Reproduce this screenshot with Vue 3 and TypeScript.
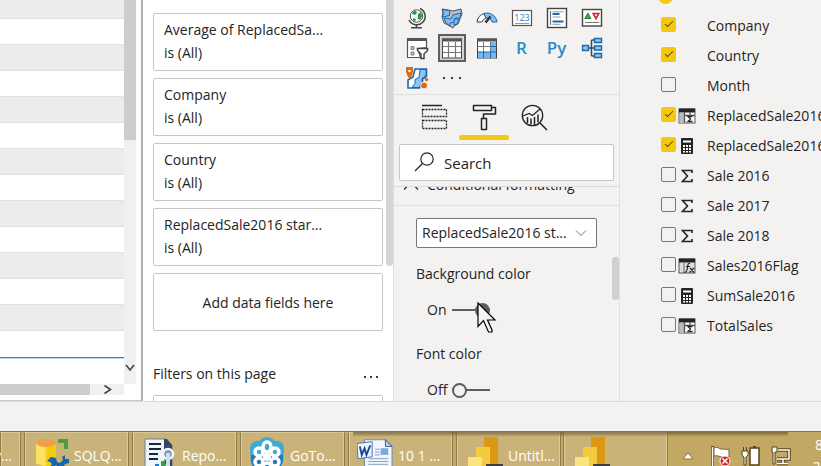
<script setup lang="ts">
import { ref } from 'vue'

interface Field {
  name: string
  checked: boolean
  kind: 'none' | 'sum' | 'calc' | 'table' | 'fx'
}

const rows = Array.from({ length: 14 }, (_, i) => i)

const filters = ref(['Average of ReplacedSa...', 'Company', 'Country', 'ReplacedSale2016 star...'])

const fields = ref<Field[]>([
  { name: 'Company', checked: true, kind: 'none' },
  { name: 'Country', checked: true, kind: 'none' },
  { name: 'Month', checked: false, kind: 'none' },
  { name: 'ReplacedSale2016', checked: true, kind: 'table' },
  { name: 'ReplacedSale2016', checked: true, kind: 'calc' },
  { name: 'Sale 2016', checked: false, kind: 'sum' },
  { name: 'Sale 2017', checked: false, kind: 'sum' },
  { name: 'Sale 2018', checked: false, kind: 'sum' },
  { name: 'Sales2016Flag', checked: false, kind: 'fx' },
  { name: 'SumSale2016', checked: false, kind: 'calc' },
  { name: 'TotalSales', checked: false, kind: 'table' },
])

const search = ref('')
const background = ref(true)
const fontColor = ref(false)
</script>

<template>
  <div class="screen">
    <main class="workspace">
      <section class="canvas">
        <div class="grid-area">
          <div class="grid-rows">
            <div v-for="r in rows" :key="r" class="grid-row"></div>
            <div class="grid-total"></div>
          </div>
          <div class="vscroll">
            <div class="vthumb"></div>
            <svg class="varrow" width="12" height="12" viewBox="0 0 12 12"><path d="M2 3l4 5 4-5" fill="none" stroke="#444" stroke-width="1.6" /></svg>
          </div>
        </div>
        <div class="hscroll">
          <div class="hthumb"></div>
          <svg width="12" height="11" viewBox="0 0 12 11"><path d="M2.500 1.500l6 4-6 4" fill="none" stroke="#444" stroke-width="1.600" /></svg>
        </div>
      </section>

      <section class="filters">
        <div class="filter-list">
          <article v-for="f in filters" :key="f" class="card">
            <span>{{ f }}</span>
            <span>is (All)</span>
          </article>
          <article class="card drop">Add data fields here</article>
          <header class="filter-head">
            <span>Filters on this page</span>
            <button class="dots" aria-label="More options"><i></i><i></i><i></i></button>
          </header>
          <article class="card"></article>
        </div>
        <div class="filter-bar"></div>
      </section>

      <section class="visuals">
        <div class="gallery">
          <button aria-label="Globe map">
            <svg viewBox="0 0 24 24"><circle cx="11.500" cy="10" r="6.200" fill="#fff" stroke="#555" /><path d="M8 5.500l3-1 1 2.500-2 2-3-1zM13 8l3-2 1.200 4-2 4-2.500-1zM8 12l3 1-1 2.500-2-1z" fill="#2c9a4b" /><path d="M15 2.500a8.500 8.500 0 1 1-11 11.500M11.500 18.500v3M6 21.700h11" fill="none" stroke="#444" stroke-width="1.500" /></svg>
          </button>
          <button aria-label="Filled map">
            <svg viewBox="0 0 24 24"><path d="M2 3l6 1 5 1 8-2 1 5-2 5-2 5-4 2-1 2-5-3-4-2-2-6 1-4z" fill="#bdbbb9" stroke="#555" /><path d="M2.500 3.500l7 1v5l-7 1.500 1-4zM13 9l8-2-1 5h-5v4l-5 1v3l-4-3-2-5 7 1z" fill="#83bdf0" stroke="#1769b3" /><path d="M14 13h5l-2 5-3 1z" fill="#83bdf0" stroke="#1769b3" /></svg>
          </button>
          <button aria-label="Gauge">
            <svg viewBox="0 0 24 24"><path d="M2 16a10 10 0 0 1 7-8.500l2 4.500a6 6 0 0 0-4 4z" fill="#fff" stroke="#444" /><path d="M9 7.500A10 10 0 0 1 22 16h-5a5 5 0 0 0-6-4z" fill="#83bdf0" stroke="#1769b3" /><path d="M10.500 16.500l5-6" stroke="#333" stroke-width="2.600" /></svg>
          </button>
          <button aria-label="Card">
            <svg viewBox="0 0 24 24"><rect x="2.500" y="4.500" width="19" height="15" fill="#fff" stroke="#555" stroke-width="1.200" /><text x="12" y="15" text-anchor="middle" font-size="9" fill="#1f80cc">123</text><path d="M5 17.500h14" stroke="#999" /></svg>
          </button>
          <button aria-label="Multi-row card">
            <svg viewBox="0 0 24 24"><rect x="2.500" y="2.500" width="19" height="19" fill="#fff" stroke="#444" stroke-width="1.400" /><path d="M5.500 5v14" stroke="#777" stroke-width="1.200" /><path d="M7.500 8h7M7.500 15.500h11" stroke="#1769b3" stroke-width="2" /><path d="M7.500 5.800h11M7.500 11h8M7.500 18.300h8" stroke="#999" /></svg>
          </button>
          <button aria-label="KPI">
            <svg viewBox="0 0 24 24"><rect x="2.500" y="3.500" width="19" height="16.500" fill="#fff" stroke="#444" stroke-width="1.400" /><path d="M4.800 12.500l3-5.500 3 5.500z" fill="#3eaa57" stroke="#237a39" /><path d="M13.200 7.500h5.600l-2.800 5z" fill="#fff" stroke="#d9262c" stroke-width="1.600" /><path d="M5 16.500h14" stroke="#777" /></svg>
          </button>
          <button aria-label="Slicer">
            <svg viewBox="0 0 24 24"><path d="M2.500 2.500h19v9l-9 1 3 9h-13z" fill="#fff" stroke="#555" stroke-width="1.200" /><path d="M2 3.500h20" stroke="#555" stroke-width="3" /><path d="M6 10.500h3v3H6zM6 16h3v3H6z" fill="#bbb" stroke="#888" /><path d="M12.500 12.500h10v2l-3.500 3.500v4.500h-3V18l-3.500-3.500z" fill="#fff" stroke="#444" stroke-width="1.500" /></svg>
          </button>
          <button class="selected" aria-label="Table">
            <svg viewBox="0 0 24 24"><rect x="2.500" y="3" width="19" height="19" fill="#fff" stroke="#444" /><path d="M2 4h20" stroke="#555" stroke-width="3" /><path d="M2.500 10.500h19M2.500 16.500h19M8.500 6v16M15.500 6v16" stroke="#777" stroke-width="1.200" /></svg>
          </button>
          <button aria-label="Matrix">
            <svg viewBox="0 0 24 24"><rect x="2.500" y="3" width="19" height="19" fill="#fff" stroke="#444" /><path d="M15.500 6H21v15.500H3V16h12.500z" fill="#75b7f0" /><path d="M2 4h20" stroke="#555" stroke-width="3" /><path d="M2.500 10.500h13M8.500 6v10M15.500 6v10" stroke="#777" /><path d="M15.500 10.500h6M3 16h18.500M8.500 16v6M15.500 16v6" stroke="#1769b3" /></svg>
          </button>
          <button class="script">R</button>
          <button class="script">Py</button>
          <button aria-label="Decomposition tree">
            <svg viewBox="0 0 24 24"><path d="M8 12h7M11.500 4v16M11.500 4h4M11.500 20h4" fill="none" stroke="#444" stroke-width="1.500" /><path d="M2.500 9.500h6v5h-6zM14.500 2.500h7v4h-7zM14.500 10h7v4h-7zM14.500 17.500h7v4h-7z" fill="#8ec3f2" stroke="#1769b3" stroke-width="1.400" /></svg>
          </button>
          <button aria-label="ArcGIS map">
            <svg viewBox="0 0 24 24"><path d="M10 3h11.500v7l-4 3v4l-3 5H3v-8l5-3z" fill="#fff" stroke="#1769b3" stroke-width="1.600" /><path d="M15 3.500h6v6l-4 3v4l-3 5H7l3-4v-4l4-2z" fill="#8ec3f2" stroke="#1769b3" /><path d="M4.800 13.500C2.500 10 1 8 1 5V1h7v4c0 3-1.500 5-3.200 8.500z" fill="#dc6c0b" /><circle cx="4.500" cy="5" r="1.300" fill="#fff" /><circle cx="19" cy="19.500" r="3.500" fill="#dc6c0b" stroke="#f3f2f1" /><circle cx="21.500" cy="13.500" r="1.800" fill="#dc6c0b" /></svg>
          </button>
          <button class="dots wide" aria-label="More visuals"><i></i><i></i><i></i></button>
        </div>

        <nav class="tabs">
          <button aria-label="Fields">
            <svg viewBox="0 0 28 28"><path d="M2 2.500h20" stroke="#252423" stroke-width="1.500" /><path d="M2.500 6.500h24v7h-24zM2.500 17.500h24v8h-24z" fill="none" stroke="#252423" stroke-width="1.300" stroke-dasharray="2 1" /></svg>
          </button>
          <button class="active" aria-label="Format">
            <svg viewBox="0 0 28 28"><path d="M3.500 2.500h18v5h-18zM21.500 4.500h4v6.500h-12v4M11.500 15.500h5v11h-5z" fill="none" stroke="#252423" stroke-width="1.500" stroke-linejoin="round" /></svg>
          </button>
          <button aria-label="Analytics">
            <svg viewBox="0 0 28 28"><circle cx="12.500" cy="12.500" r="10.200" fill="none" stroke="#252423" stroke-width="1.300" /><path d="M20 20l7 7" stroke="#252423" stroke-width="1.600" /><path d="M3 13l6-2.500 3.500 2L20 6" fill="none" stroke="#252423" stroke-width="1.300" /><path d="M7.500 14v6M11 15.500v6M14.500 14v8M18 11.500v8" stroke="#252423" stroke-width="1.500" /></svg>
          </button>
        </nav>

        <label class="search">
          <svg width="22" height="22" viewBox="0 0 22 22"><circle cx="14" cy="7" r="6.200" fill="none" stroke="#252423" stroke-width="1.200" /><path d="M9.500 11.500L2 19" stroke="#252423" stroke-width="1.200" /></svg>
          <input v-model="search" type="text" placeholder="Search" aria-label="Search" />
        </label>

        <div class="format">
          <div class="format-body">
            <button class="section-head">
              <svg width="16" height="10" viewBox="0 0 16 10"><path d="M1 9.500l7-7 7 7" fill="none" stroke="#252423" stroke-width="1.200" /></svg>
              <span>Conditional formatting</span>
            </button>
            <div class="controls">
              <div class="picker">
                <select aria-label="Field to format">
                  <option>ReplacedSale2016 st...</option>
                </select>
                <svg width="12" height="8" viewBox="0 0 12 8"><path d="M1 1.500l5 5 5-5" fill="none" stroke="#777" /></svg>
              </div>
              <label for="bg">Background color</label>
              <div class="toggle">
                <span>{{ background ? 'On' : 'Off' }}</span>
                <input id="bg" v-model="background" type="checkbox" role="switch" />
                <svg class="cursor" width="20" height="32" viewBox="0 0 20 32"><path d="M1 1v23.500l5.500-6 5 11.500h3.500v-2l-4.500-10H18z" fill="#f3f6f8" stroke="#000" stroke-width="1.200" /></svg>
              </div>
              <label for="fc">Font color</label>
              <div class="toggle">
                <span>{{ fontColor ? 'On' : 'Off' }}</span>
                <input id="fc" v-model="fontColor" type="checkbox" role="switch" />
              </div>
            </div>
          </div>
          <div class="format-bar"></div>
        </div>
      </section>

      <section class="fields">
        <div class="source-dot"></div>
        <label v-for="(f, i) in fields" :key="i" class="field">
          <input v-model="f.checked" type="checkbox" />
          <svg class="field-icon" viewBox="0 0 18 18">
            <path v-if="f.kind === 'sum'" d="M14 6V3.500H4.500l5 5.500-5 5.500H14V12" fill="none" stroke="#252423" stroke-width="1.600" />
            <g v-else-if="f.kind === 'calc'">
              <rect x="3" y="1" width="12" height="16" rx="1" fill="#252423" />
              <path d="M5 3.500h8v2H5zM5 8h2v2H5zM8 8h2v2H8zM11 8h2v2h-2zM5 11h2v2H5zM8 11h2v2H8zM11 11h2v2h-2zM5 14h2v1.500H5zM8 14h2v1.500H8zM11 14h2v1.500h-2z" fill="#fff" />
            </g>
            <g v-else-if="f.kind === 'table'">
              <rect x="1" y="2" width="16" height="14" fill="#fff" stroke="#555" />
              <path d="M1 3.500h16" stroke="#252423" stroke-width="4" />
              <path d="M2 6h4v10H2z" fill="#bbb" />
              <path d="M6.500 5v11M12 5v3M6 8.500h11" stroke="#555" stroke-width="1.300" />
              <path d="M14.500 9.500H10l2.500 2.500L10 14.500h4.500" fill="none" stroke="#252423" stroke-width="1.300" />
            </g>
            <g v-else-if="f.kind === 'fx'">
              <rect x="1" y="2" width="16" height="14" fill="#ddd" stroke="#555" />
              <path d="M1 3.500h16" stroke="#252423" stroke-width="4" />
              <path d="M6 6v10" stroke="#666" />
              <path d="M12 6.500c-2-1-2 1-2.500 4s-1 5-3 5M8 9.500h4M12 11l4 4.500M16 11l-4.500 4.500" fill="none" stroke="#252423" stroke-width="1.200" />
            </g>
          </svg>
          <span>{{ f.name }}</span>
        </label>
      </section>
    </main>

    <div class="status"></div>

    <footer class="taskbar">
      <button class="task first"><span>y...</span></button>
      <button class="task">
        <svg viewBox="0 0 36 32"><path d="M25 2h10v10h-4V6h-6zM-1 29h5v3h-5z" fill="#4d9b43" /><path d="M3 6v20c3 4 17 4 20 0V6z" fill="#fbd32b" /><path d="M14 8h9v19l-9 2z" fill="#f6c90a" /><path d="M3 6v20l9 3V8z" fill="#fde163" /><ellipse cx="13" cy="6" rx="10" ry="4" fill="#f0a04c" /><path d="M14 24l4-4 5 1 1 4 3 1 3-3-1-3 3-2v4h5l-1 4-4 1-2 4h-4l-3-3-4 4h-4l4-5-2-2z" fill="#1467a8" /></svg>
        <span>SQLQ...</span>
      </button>
      <button class="task">
        <svg viewBox="0 0 36 32"><path d="M4 2h20l7 6v24H4z" fill="#eff5fa" stroke="#6a7f9b" /><path d="M23 2h3l5 6v24h-6l-2-12z" fill="#2f4865" /><path d="M8 7h12M8 12h12M8 17h9M8 22h9" stroke="#182638" stroke-width="2" /><path d="M8 29h4v3H8z" fill="#f15b27" /><path d="M14 27h4v5h-4z" fill="#1c7cd5" /><path d="M20 24h4v8h-4z" fill="#33a13d" /><circle cx="27" cy="17" r="5" fill="#7f98b2" stroke="#f3f7fb" stroke-width="2.500" /><path d="M27 16v16" stroke="#d2deea" stroke-width="4" /></svg>
        <span>Repo...</span>
      </button>
      <button class="task">
        <svg viewBox="0 0 36 32"><path d="M18 0c5 0 6 3 8 4 5-1 9 3 9 7s0 5-1 8c1 6-2 11-4 13H6c-3-3-5-8-4-13-1-3-1-4-1-8s4-8 9-7c2-1 3-4 8-4z" fill="#43a9cf" /><path d="M2 18h32c1 7-2 11-4 14H6c-3-3-5-8-4-14z" fill="#2878bd" /><g fill="none" stroke="#fff" stroke-width="3.500"><ellipse cx="18" cy="10" rx="4" ry="5" /><ellipse cx="10" cy="15" rx="4" ry="4" /><ellipse cx="26" cy="15" rx="4" ry="4" /><ellipse cx="10" cy="25" rx="4" ry="4" /><ellipse cx="26" cy="25" rx="4" ry="4" /><ellipse cx="18" cy="31" rx="4" ry="5" /></g><circle cx="18" cy="20" r="4" fill="#fff" /></svg>
        <span>GoTo...</span>
      </button>
      <button class="task">
        <svg viewBox="0 0 38 32"><path d="M8 2h22l7 7v23H8z" fill="#f1f6fc" stroke="#6688b5" /><path d="M30 2v7h7z" fill="#bcd1e8" stroke="#315a91" /><path d="M12 22h21M12 25h21M12 28h21M12 31h21M19 12h5M19 15h5M19 18h5" stroke="#7ba1cf" /><path d="M25 11h8v7h-8z" fill="#79abd7" /><path d="M0 6l16-2v16L1 22z" fill="#eff5ff" stroke="#4c6eae" /><path d="M3 9l2 9 3-7 2 7 4-10" fill="none" stroke="#244596" stroke-width="2" /></svg>
        <span>10 1 ...</span>
      </button>
      <button v-for="n in 2" :key="n" class="task bi">
        <svg viewBox="0 0 36 32"><path d="M17 0h14v32H17z" fill="#dc9813" /><path d="M9 10h14v22H9z" fill="#f3cc3e" /><path d="M1 20h14v12H1z" fill="#fae47f" /><rect x="19" y="27" width="17" height="7" rx="1" fill="#3e3e3e" /><path d="M22 31h5M29 31h4" stroke="#fff" stroke-width="2" /></svg>
        <span v-if="n === 1">Untitl...</span>
      </button>
      <div class="tray">
        <svg width="12" height="8" viewBox="0 0 12 8"><path d="M6 .8L11 7H1z" fill="#fff" stroke="#8a774c" /></svg>
        <svg width="20" height="20" viewBox="0 0 20 20"><path d="M1.500 0v20" stroke="#574624" stroke-width="3" /><path d="M3 2c4-2 6 2 9 1 2 0 4 1 6 0v8c-3 2-5 0-7 0s-4-2-8-1z" fill="#fff" stroke="#796535" /><path d="M1.500 1v19" stroke="#fff" stroke-width="1.500" /><circle cx="14" cy="15" r="5" fill="#df1f23" stroke="#fff" /><path d="M11.500 12.500l5 5m0-5l-5 5" stroke="#fff" stroke-width="1.700" /></svg>
        <svg width="20" height="20" viewBox="0 0 20 20"><rect x="9" y="2" width="9" height="17" fill="#fff" stroke="#57451c" stroke-width="1.500" /><path d="M12 .8h3" stroke="#57451c" stroke-width="2" /><path d="M1 5h6v4l-2 2v8H3v-8L1 9zM2.500 1v4M5.500 1v4" fill="#fff" stroke="#57451c" /></svg>
        <svg width="20" height="20" viewBox="0 0 20 20"><path d="M7 4h11v9H6M12 13v4M6 17.500h11" fill="none" stroke="#57451c" stroke-width="3.500" /><path d="M7 4h11v9H6M12 13v4M6 17.500h11" fill="none" stroke="#fff" stroke-width="1.500" /><path d="M1 1h5v5H4v12H2V6H1z" fill="#fff" stroke="#57451c" /></svg>
        <div class="clock"><span>8</span><span>2/</span></div>
      </div>
      <div class="shade"></div>
    </footer>
  </div>
</template>

<style>
body {
  margin: 0;
  overflow: hidden;
}
</style>

<style scoped>
.screen {
  display: flex;
  flex-direction: column;
  height: 100vh;
  overflow: hidden;
  background: #f3f2f1;
  color: #252423;
  font-family: 'Open Sans', 'Noto Sans', sans-serif;
  font-size: 14px;
  line-height: 22px;
}
.screen * {
  box-sizing: border-box;
}
button {
  padding: 0;
  border: 0;
  background: none;
  color: inherit;
  font: inherit;
}
input,
select {
  margin: 0;
  color: inherit;
  font: inherit;
}
svg {
  flex: none;
  display: block;
}
.workspace {
  flex: 1;
  min-height: 0;
  display: flex;
  border-bottom: 1px solid #dddbd9;
}

/* report canvas */
.canvas {
  width: 143px;
  flex: none;
  display: flex;
  flex-direction: column;
  background: #fff;
  border-right: 2px solid #b0b0b0;
  border-bottom: 1px solid #c8c8c8;
  padding-bottom: 5px;
}
.grid-area {
  flex: 1;
  min-height: 0;
  display: flex;
}
.grid-rows {
  flex: 1;
  display: flex;
  flex-direction: column;
  justify-content: flex-end;
  overflow: hidden;
}
.grid-row {
  height: 26px;
  flex: none;
  border-bottom: 1px solid #e2e2e2;
}
.grid-row:nth-child(odd) {
  background: #ececec;
}
.grid-row:nth-last-child(2) {
  border-bottom: 0;
}
.grid-total {
  height: 27px;
  flex: none;
  border-top: 1px solid #1e8be0;
  box-shadow: inset 0 1px #b9ddf8;
}
.vscroll {
  width: 12px;
  margin-right: 5px;
  display: flex;
  flex-direction: column;
  justify-content: space-between;
  background: #f0f0f0;
  padding-bottom: 10px;
}
.vthumb {
  height: 140px;
  background: #cdcdcd;
}
.hscroll {
  display: flex;
  align-items: center;
  gap: 12px;
  height: 11px;
  margin-right: 17px;
  background: #f0f0f0;
}
.hthumb {
  width: 90px;
  height: 11px;
  background: #cdcdcd;
}

/* filters */
.filters {
  width: 251px;
  flex: none;
  display: flex;
  justify-content: space-between;
  overflow: hidden;
  background: #fff;
  border-right: 1px solid #e1dfdd;
}
.filter-list {
  display: flex;
  flex-direction: column;
  gap: 7px;
  width: 240px;
  padding: 13px 0 0 10px;
}
.card {
  flex: none;
  display: flex;
  flex-direction: column;
  height: 58px;
  padding: 4px 10px 6px;
  border: 1px solid #c8c6c4;
  border-radius: 2px;
  line-height: 23px;
}
.drop {
  align-items: center;
  justify-content: center;
  padding: 0;
}
.filter-head {
  display: flex;
  align-items: center;
  justify-content: space-between;
  height: 28px;
  flex: none;
  margin-top: 22px;
  padding-right: 5px;
}
.dots {
  display: flex;
  align-items: center;
  gap: 4px;
  padding-top: 6px;
}
.dots i {
  width: 2px;
  height: 2px;
  background: #3b3a39;
}
.filter-bar {
  width: 7px;
  height: 266px;
  background: #d8d6d4;
  border-radius: 0 0 3px 3px;
}

/* visualizations */
.visuals {
  width: 226px;
  flex: none;
  display: flex;
  flex-direction: column;
  border-right: 1px solid #e1dfdd;
}
.gallery {
  display: grid;
  grid-template-columns: repeat(6, 35px);
  grid-auto-rows: 30px;
  place-items: center;
  padding: 3px 0 1px 5px;
  border-bottom: 1px solid #e1dfdd;
}
.gallery svg {
  width: 24px;
  height: 24px;
}
.gallery .selected {
  border: 2px solid #605e5c;
  background: #d6d4d2;
}
.script {
  color: #268bc8;
  font-size: 17px;
  font-weight: 600;
}
.gallery .wide {
  gap: 6px;
  padding: 0;
}
.tabs {
  display: flex;
  padding: 8px 0 0 15px;
}
.tabs button {
  width: 50px;
  height: 37px;
  display: flex;
  flex-direction: column;
  align-items: center;
  justify-content: space-between;
}
.tabs .active::after {
  content: '';
  width: 100%;
  height: 5px;
  border-radius: 2px;
  background: #f2c811;
}
.tabs svg {
  width: 28px;
  height: 28px;
}
.search {
  display: flex;
  align-items: center;
  gap: 9px;
  height: 37px;
  margin: 4px 5px 5px;
  padding: 0 14px 0 13px;
  border: 1px solid #c8c6c4;
  border-radius: 2px;
  background: #fff;
}
.search input {
  flex: 1;
  min-width: 0;
  padding: 0;
  border: 0;
  outline: 0;
  background: none;
  font-size: 15px;
}
.search input::placeholder {
  color: #252423;
  opacity: 1;
}
.format {
  flex: 1;
  min-height: 0;
  display: flex;
  overflow: hidden;
  border-top: 1px solid #dddbd9;
}
.format-body {
  flex: 1;
  margin-top: -14px;
}
.section-head {
  display: flex;
  align-items: center;
  gap: 8px;
  width: 218px;
  height: 32px;
  padding: 0 0 8px 9px;
}
.controls {
  width: 225px;
  display: flex;
  flex-direction: column;
  padding: 12px 22px 0;
  border-top: 1px solid #e1dfdd;
}
.picker {
  display: grid;
  align-items: center;
  margin-bottom: 15px;
}
.picker select,
.picker svg {
  grid-area: 1 / 1;
}
.picker select {
  appearance: none;
  width: 100%;
  height: 30px;
  padding: 0 5px;
  border: 1px solid #7a7876;
  border-radius: 2px;
  background: #fff;
}
.picker svg {
  justify-self: end;
  margin-right: 10px;
  pointer-events: none;
}
.toggle {
  position: relative;
  display: flex;
  align-items: center;
  gap: 5px;
  height: 22px;
  margin: 14px 0 22px;
  padding-left: 11px;
}
.toggle span {
  width: 20px;
}
.toggle input {
  appearance: none;
  display: flex;
  align-items: center;
  width: 38px;
  height: 16px;
  background: linear-gradient(#605e5c, #605e5c) center / 100% 2px no-repeat;
}
.toggle input::before {
  content: '';
  width: 15px;
  height: 15px;
  box-sizing: border-box;
  border: 2px solid #605e5c;
  border-radius: 50%;
  background: #f3f2f1;
}
.toggle input:checked {
  justify-content: flex-end;
}
.toggle input:checked::before {
  background: #605e5c;
}
.cursor {
  position: absolute;
  left: 61px;
  top: 3px;
}
.format-bar {
  width: 7px;
  height: 43px;
  flex: none;
  margin: 70px 0 0 -7px;
  border-radius: 3px;
  background: #d2d0ce;
}

/* fields */
.fields {
  flex: 1;
  min-width: 0;
  position: relative;
  overflow: hidden;
  padding: 11px 0 0 41px;
}
.source-dot {
  position: absolute;
  left: 38px;
  top: -11px;
  width: 15px;
  height: 15px;
  border-radius: 50%;
  background: #f2c811;
}
.field {
  display: flex;
  align-items: center;
  height: 30px;
  white-space: nowrap;
}
.field input {
  appearance: none;
  flex: none;
  display: grid;
  place-items: center;
  width: 15px;
  height: 15px;
  margin-bottom: 3px;
  border: 1px solid #797775;
  border-radius: 2px;
}
.field input:checked {
  border-color: #f2c811;
  background: #f2c811;
}
.field input:checked::before {
  content: '';
  width: 8px;
  height: 4px;
  margin-bottom: 3px;
  box-sizing: border-box;
  border: solid #5c4c0a;
  border-width: 0 0 1px 1px;
  transform: rotate(-45deg);
}
.field-icon {
  width: 18px;
  height: 18px;
  margin: 0 11px 0 2px;
}

/* bottom chrome */
.status {
  height: 29px;
  flex: none;
}
.taskbar {
  position: relative;
  height: 35px;
  flex: none;
  display: flex;
  gap: 3px;
  overflow: hidden;
  border-top: 1px solid #887446;
  background: #c2a863;
  color: #fff;
}
.shade {
  position: absolute;
  top: 0;
  left: 43%;
  right: 4%;
  height: 5px;
  background: linear-gradient(rgba(80, 65, 30, 0.6), rgba(80, 65, 30, 0));
  pointer-events: none;
}
.task {
  width: 105px;
  height: 42px;
  flex: none;
  display: flex;
  align-items: flex-start;
  gap: 5px;
  padding: 4px 0 0 8px;
  border: 1px solid #8f7b4b;
  border-top-color: #dac894;
  background: #cab379;
  box-shadow: inset 1px 0 #dccb9b, inset -1px 0 #dccb9b;
}
.task svg {
  width: 36px;
  height: 32px;
}
.task span {
  margin-top: 8px;
}
.task.first {
  width: 21px;
  padding: 4px 8px 0 0;
  justify-content: flex-end;
}
.task.bi {
  padding-left: 10px;
}
.task.bi + .task.bi {
  margin-left: -1px;
}
.tray {
  flex: 1;
  display: flex;
  align-items: flex-start;
  gap: 10px;
  padding: 14px 0 0 11px;
}
.tray svg:first-child {
  margin: 6px 7px 0 0;
}
.clock {
  flex: none;
  display: flex;
  flex-direction: column;
  align-items: center;
  width: 24px;
  margin: -12px 0 0 6px;
}
</style>
